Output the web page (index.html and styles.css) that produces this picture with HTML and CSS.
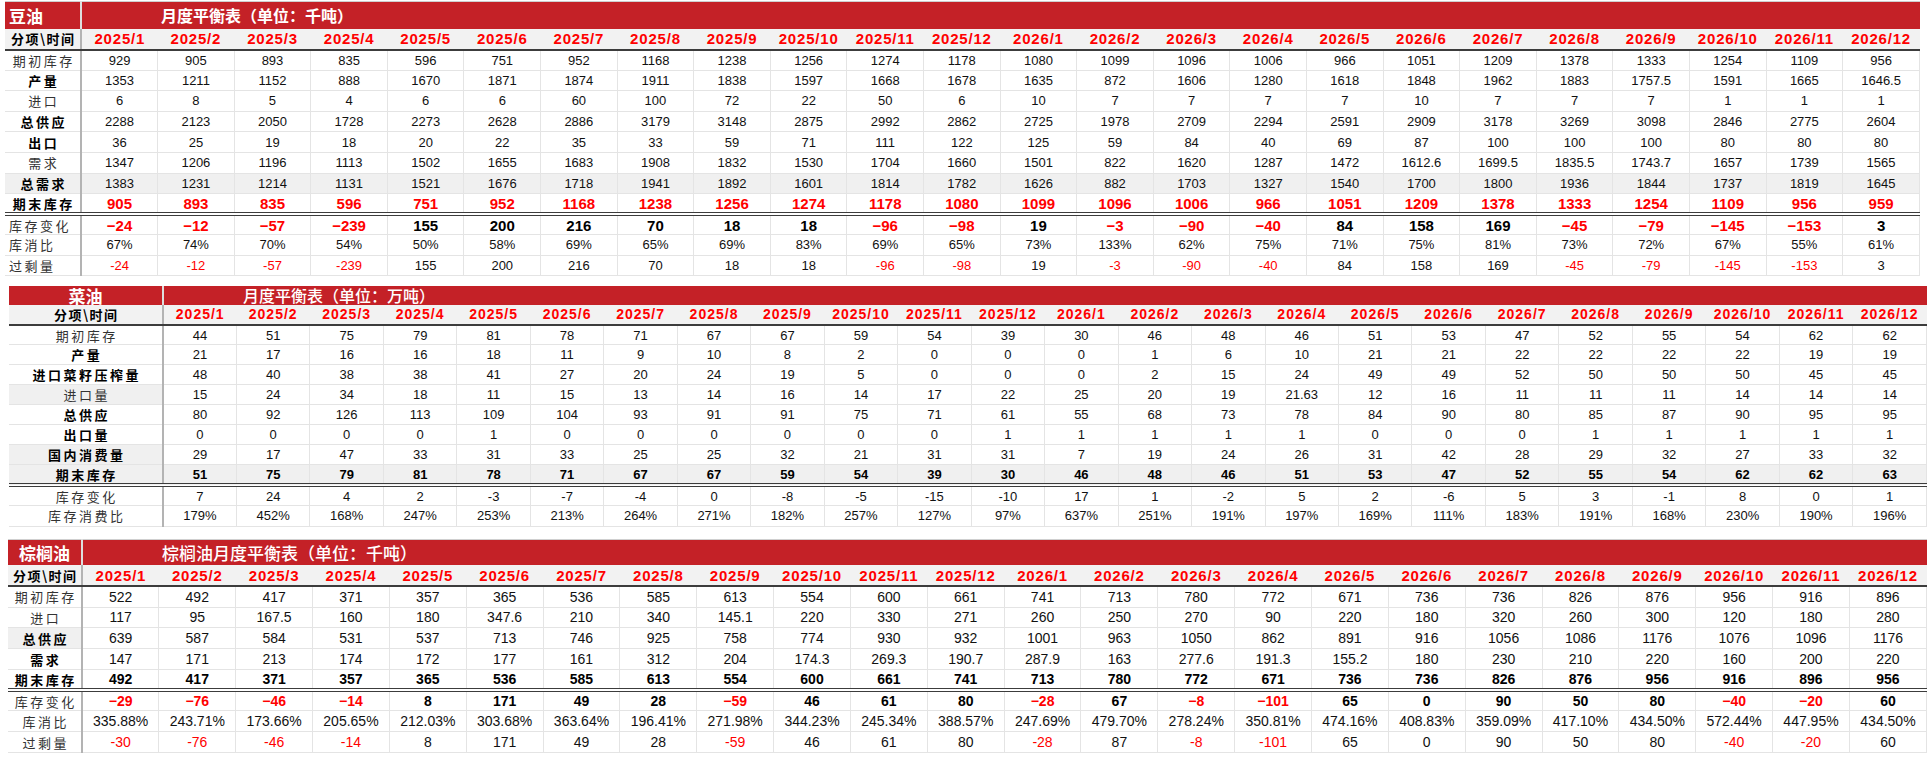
FILE: index.html
```html
<!DOCTYPE html>
<html lang="zh-CN">
<head>
<meta charset="utf-8">
<title>油脂月度平衡表</title>
<link rel="stylesheet" href="styles.css">
</head>
<body>
<div class="sheet">
  <table class="bal bal-soy" id="t-soy">
    <colgroup><col class="c-label"></colgroup>
    <thead>
      <tr class="title-row"><th class="lab title-lab left">豆油</th><th colspan="24" class="title">月度平衡表（单位：千吨）</th></tr>
      <tr class="head-row"><th class="lab head-lab">分项\时间</th></tr>
    </thead>
    <tbody class="main"></tbody>
    <tbody class="extra"></tbody>
  </table>

  <table class="bal bal-rape" id="t-rape">
    <colgroup><col class="c-label"></colgroup>
    <thead>
      <tr class="title-row"><th class="lab title-lab">菜油</th><th colspan="24" class="title">月度平衡表（单位：万吨）</th></tr>
      <tr class="head-row"><th class="lab head-lab">分项\时间</th></tr>
    </thead>
    <tbody class="main"></tbody>
    <tbody class="extra"></tbody>
  </table>

  <table class="bal bal-palm" id="t-palm">
    <colgroup><col class="c-label"></colgroup>
    <thead>
      <tr class="title-row"><th class="lab title-lab">棕榈油</th><th colspan="24" class="title">棕榈油月度平衡表（单位：千吨）</th></tr>
      <tr class="head-row"><th class="lab head-lab">分项\时间</th></tr>
    </thead>
    <tbody class="main"></tbody>
    <tbody class="extra"></tbody>
  </table>
</div>
<script src="app.js"></script>
</body>
</html>
```

FILE: styles.css
```css
* { box-sizing: border-box; }

body {
  margin: 0;
  background: #ffffff;
  font-family: "Liberation Sans", Arial, "Noto Sans CJK SC", sans-serif;
  color: #000;
}

.sheet {
  display: flex;
  flex-direction: column;
  align-items: flex-start;
}

table.bal {
  border-collapse: collapse;
  table-layout: fixed;
}

.bal th,
.bal td {
  padding: 0;
  white-space: nowrap;
  text-align: center;
  vertical-align: middle;
  line-height: 1;
}

/* table placement */
.bal-soy { width: 1915px; margin: 1px 0 0 5px; border-top: 1px solid #cfcfcf; }
.bal-soy .c-label { width: 76px; }
.bal-rape { width: 1918px; margin: 10px 0 0 9px; }
.bal-rape .c-label { width: 154px; }
.bal-palm { width: 1919px; margin: 12px 0 0 8px; border-top: 1px solid #cfcfcf; }
.bal-palm .c-label { width: 74px; }

/* title row */
.title-row th {
  background: #c42127;
  color: #ffffff;
  font-family: "Noto Sans CJK SC", sans-serif;
}
.title-row .lab { border-right: 2px solid #dedede; }
.title-lab { font-size: 17px; font-weight: 700; }
.title-lab.left { text-align: left; padding-left: 4px; }
.title {
  text-align: left !important;
  padding-left: 79px !important;
  font-size: 16px;
  font-weight: 700;
}
.bal-rape .title, .bal-palm .title { font-weight: 500; }
.bal-palm .title { font-size: 17px; }

/* header row */
.head-row th {
  background: #f2f2f2;
  border-bottom: 2px solid #3c3c3c;
}
.head-lab {
  font-family: "Noto Sans CJK SC", sans-serif;
  font-weight: 700;
  font-size: 13px;
  letter-spacing: 1.5px;
  padding-left: 1.5px !important;
}
.yr {
  color: #ff0000;
  font-weight: 700;
  font-size: 15px;
  letter-spacing: 0.8px;
}
.bal-rape .yr { font-size: 14px; letter-spacing: 1px; }

/* label column */
.lab { border-right: 2px solid #b3b3b3; }
tbody .lab {
  font-family: "Noto Sans CJK SC", sans-serif;
  font-weight: 400;
  font-size: 13px;
  letter-spacing: 2.5px;
  padding-left: 2.5px !important;
  color: #333;
  border-top: 1px solid #e4e4e4;
  border-bottom: 1px solid #e4e4e4;
}
tbody .lab.b { font-weight: 700; color: #000; }
tbody .lab.l { text-align: left; padding-left: 4px !important; }
tbody .lab.g { background: #f0f0f0; }

/* numbers */
.num {
  border: 1px solid #e4e4e4;
  font-size: 13px;
  color: #111;
}
.bold { font-weight: 700; font-size: 15px; color: #000; }
.neg { color: #ff0000; }
.bal-rape .bold { font-size: 13px; }
.bal-palm .num { font-size: 14px; }
.bal-palm .bold { font-size: 14px; }

tr.gray td, tr.gray th { background: #f0f0f0; }

tbody.main tr:last-child td,
tbody.main tr:last-child th { border-bottom: 4px double #3c3c3c; }

/* row heights */
.bal-soy .title-row th { height: 27px; }
.bal-soy .head-row th { height: 21px; }
.bal-soy tbody.main td, .bal-soy tbody.main th { height: 20.6px; }
.bal-soy tbody.extra td, .bal-soy tbody.extra th { height: 20.4px; }

.bal-rape .title-row th { height: 19px; }
.bal-rape .head-row th { height: 20px; }
.bal-rape tbody.main td, .bal-rape tbody.main th { height: 20px; }
.bal-rape tbody.extra td, .bal-rape tbody.extra th { height: 20.7px; }

.bal-palm .title-row th { height: 26px; }
.bal-palm .head-row th { height: 21px; }
.bal-palm tbody.main td, .bal-palm tbody.main th { height: 20.8px; }
.bal-palm tbody.extra td, .bal-palm tbody.extra th { height: 20.7px; }
```

FILE: app.js
```js
(function () {
  var YEARS = [];
  [2025, 2026].forEach(function (y) {
    for (var m = 1; m <= 12; m++) YEARS.push(y + '/' + m);
  });

  var SOY = {
    main: [
      { label: '期初库存', vals: '929 905 893 835 596 751 952 1168 1238 1256 1274 1178 1080 1099 1096 1006 966 1051 1209 1378 1333 1254 1109 956' },
      { label: '产量', lc: 'b', vals: '1353 1211 1152 888 1670 1871 1874 1911 1838 1597 1668 1678 1635 872 1606 1280 1618 1848 1962 1883 1757.5 1591 1665 1646.5' },
      { label: '进口', vals: '6 8 5 4 6 6 60 100 72 22 50 6 10 7 7 7 7 10 7 7 7 1 1 1' },
      { label: '总供应', lc: 'b', vals: '2288 2123 2050 1728 2273 2628 2886 3179 3148 2875 2992 2862 2725 1978 2709 2294 2591 2909 3178 3269 3098 2846 2775 2604' },
      { label: '出口', lc: 'b', vals: '36 25 19 18 20 22 35 33 59 71 111 122 125 59 84 40 69 87 100 100 100 80 80 80' },
      { label: '需求', vals: '1347 1206 1196 1113 1502 1655 1683 1908 1832 1530 1704 1660 1501 822 1620 1287 1472 1612.6 1699.5 1835.5 1743.7 1657 1739 1565' },
      { label: '总需求', lc: 'b', rc: 'gray', vals: '1383 1231 1214 1131 1521 1676 1718 1941 1892 1601 1814 1782 1626 882 1703 1327 1540 1700 1800 1936 1844 1737 1819 1645' },
      { label: '期末库存', lc: 'b', type: 'endred', vals: '905 893 835 596 751 952 1168 1238 1256 1274 1178 1080 1099 1096 1006 966 1051 1209 1378 1333 1254 1109 956 959' }
    ],
    extra: [
      { label: '库存变化', lc: 'l', type: 'chg', vals: '-24 -12 -57 -239 155 200 216 70 18 18 -96 -98 19 -3 -90 -40 84 158 169 -45 -79 -145 -153 3' },
      { label: '库消比', lc: 'l', vals: '67% 74% 70% 54% 50% 58% 69% 65% 69% 83% 69% 65% 73% 133% 62% 75% 71% 75% 81% 73% 72% 67% 55% 61%' },
      { label: '过剩量', lc: 'l', type: 'surplus', vals: '-24 -12 -57 -239 155 200 216 70 18 18 -96 -98 19 -3 -90 -40 84 158 169 -45 -79 -145 -153 3' }
    ]
  };

  var RAPE = {
    main: [
      { label: '期初库存', vals: '44 51 75 79 81 78 71 67 67 59 54 39 30 46 48 46 51 53 47 52 55 54 62 62' },
      { label: '产量', lc: 'b', vals: '21 17 16 16 18 11 9 10 8 2 0 0 0 1 6 10 21 21 22 22 22 22 19 19' },
      { label: '进口菜籽压榨量', lc: 'b', vals: '48 40 38 38 41 27 20 24 19 5 0 0 0 2 15 24 49 49 52 50 50 50 45 45' },
      { label: '进口量', lc: 'g', vals: '15 24 34 18 11 15 13 14 16 14 17 22 25 20 19 21.63 12 16 11 11 11 14 14 14' },
      { label: '总供应', lc: 'b', vals: '80 92 126 113 109 104 93 91 91 75 71 61 55 68 73 78 84 90 80 85 87 90 95 95' },
      { label: '出口量', lc: 'b', vals: '0 0 0 0 1 0 0 0 0 0 0 1 1 1 1 1 0 0 0 1 1 1 1 1' },
      { label: '国内消费量', lc: 'b g', vals: '29 17 47 33 31 33 25 25 32 21 31 31 7 19 24 26 31 42 28 29 32 27 33 32' },
      { label: '期末库存', lc: 'b', rc: 'gray', type: 'endbold', vals: '51 75 79 81 78 71 67 67 59 54 39 30 46 48 46 51 53 47 52 55 54 62 62 63' }
    ],
    extra: [
      { label: '库存变化', vals: '7 24 4 2 -3 -7 -4 0 -8 -5 -15 -10 17 1 -2 5 2 -6 5 3 -1 8 0 1' },
      { label: '库存消费比', vals: '179% 452% 168% 247% 253% 213% 264% 271% 182% 257% 127% 97% 637% 251% 191% 197% 169% 111% 183% 191% 168% 230% 190% 196%' }
    ]
  };

  var PALM = {
    main: [
      { label: '期初库存', vals: '522 492 417 371 357 365 536 585 613 554 600 661 741 713 780 772 671 736 736 826 876 956 916 896' },
      { label: '进口', vals: '117 95 167.5 160 180 347.6 210 340 145.1 220 330 271 260 250 270 90 220 180 320 260 300 120 180 280' },
      { label: '总供应', lc: 'b g', vals: '639 587 584 531 537 713 746 925 758 774 930 932 1001 963 1050 862 891 916 1056 1086 1176 1076 1096 1176' },
      { label: '需求', lc: 'b', vals: '147 171 213 174 172 177 161 312 204 174.3 269.3 190.7 287.9 163 277.6 191.3 155.2 180 230 210 220 160 200 220' },
      { label: '期末库存', lc: 'b', type: 'endbold', vals: '492 417 371 357 365 536 585 613 554 600 661 741 713 780 772 671 736 736 826 876 956 916 896 956' }
    ],
    extra: [
      { label: '库存变化', type: 'chg', vals: '-29 -76 -46 -14 8 171 49 28 -59 46 61 80 -28 67 -8 -101 65 0 90 50 80 -40 -20 60' },
      { label: '库消比', vals: '335.88% 243.71% 173.66% 205.65% 212.03% 303.68% 363.64% 196.41% 271.98% 344.23% 245.34% 388.57% 247.69% 479.70% 278.24% 350.81% 474.16% 408.83% 359.09% 417.10% 434.50% 572.44% 447.95% 434.50%' },
      { label: '过剩量', type: 'surplus', vals: '-30 -76 -46 -14 8 171 49 28 -59 46 61 80 -28 87 -8 -101 65 0 90 50 80 -40 -20 60' }
    ]
  };

  function fill(tbody, rows) {
    rows.forEach(function (r) {
      var tr = document.createElement('tr');
      if (r.rc) tr.className = r.rc;
      var th = document.createElement('th');
      th.className = 'lab' + (r.lc ? ' ' + r.lc : '');
      th.textContent = r.label;
      tr.appendChild(th);
      r.vals.split(' ').forEach(function (v) {
        var td = document.createElement('td');
        td.className = 'num';
        var text = v;
        var neg = v.charAt(0) === '-';
        if (r.type === 'chg') {
          td.classList.add('bold');
          if (neg) { td.classList.add('neg'); text = '\u2212' + v.slice(1); }
        } else if (r.type === 'surplus') {
          if (neg) td.classList.add('neg');
        } else if (r.type === 'endred') {
          td.classList.add('bold');
          td.classList.add('neg');
        } else if (r.type === 'endbold') {
          td.classList.add('bold');
        }
        td.textContent = text;
        tr.appendChild(td);
      });
      tbody.appendChild(tr);
    });
  }

  function build(id, spec) {
    var table = document.getElementById(id);
    var head = table.querySelector('.head-row');
    YEARS.forEach(function (y) {
      var th = document.createElement('th');
      th.className = 'yr';
      th.textContent = y;
      head.appendChild(th);
    });
    fill(table.querySelector('tbody.main'), spec.main);
    fill(table.querySelector('tbody.extra'), spec.extra);
  }

  build('t-soy', SOY);
  build('t-rape', RAPE);
  build('t-palm', PALM);
})();
```
